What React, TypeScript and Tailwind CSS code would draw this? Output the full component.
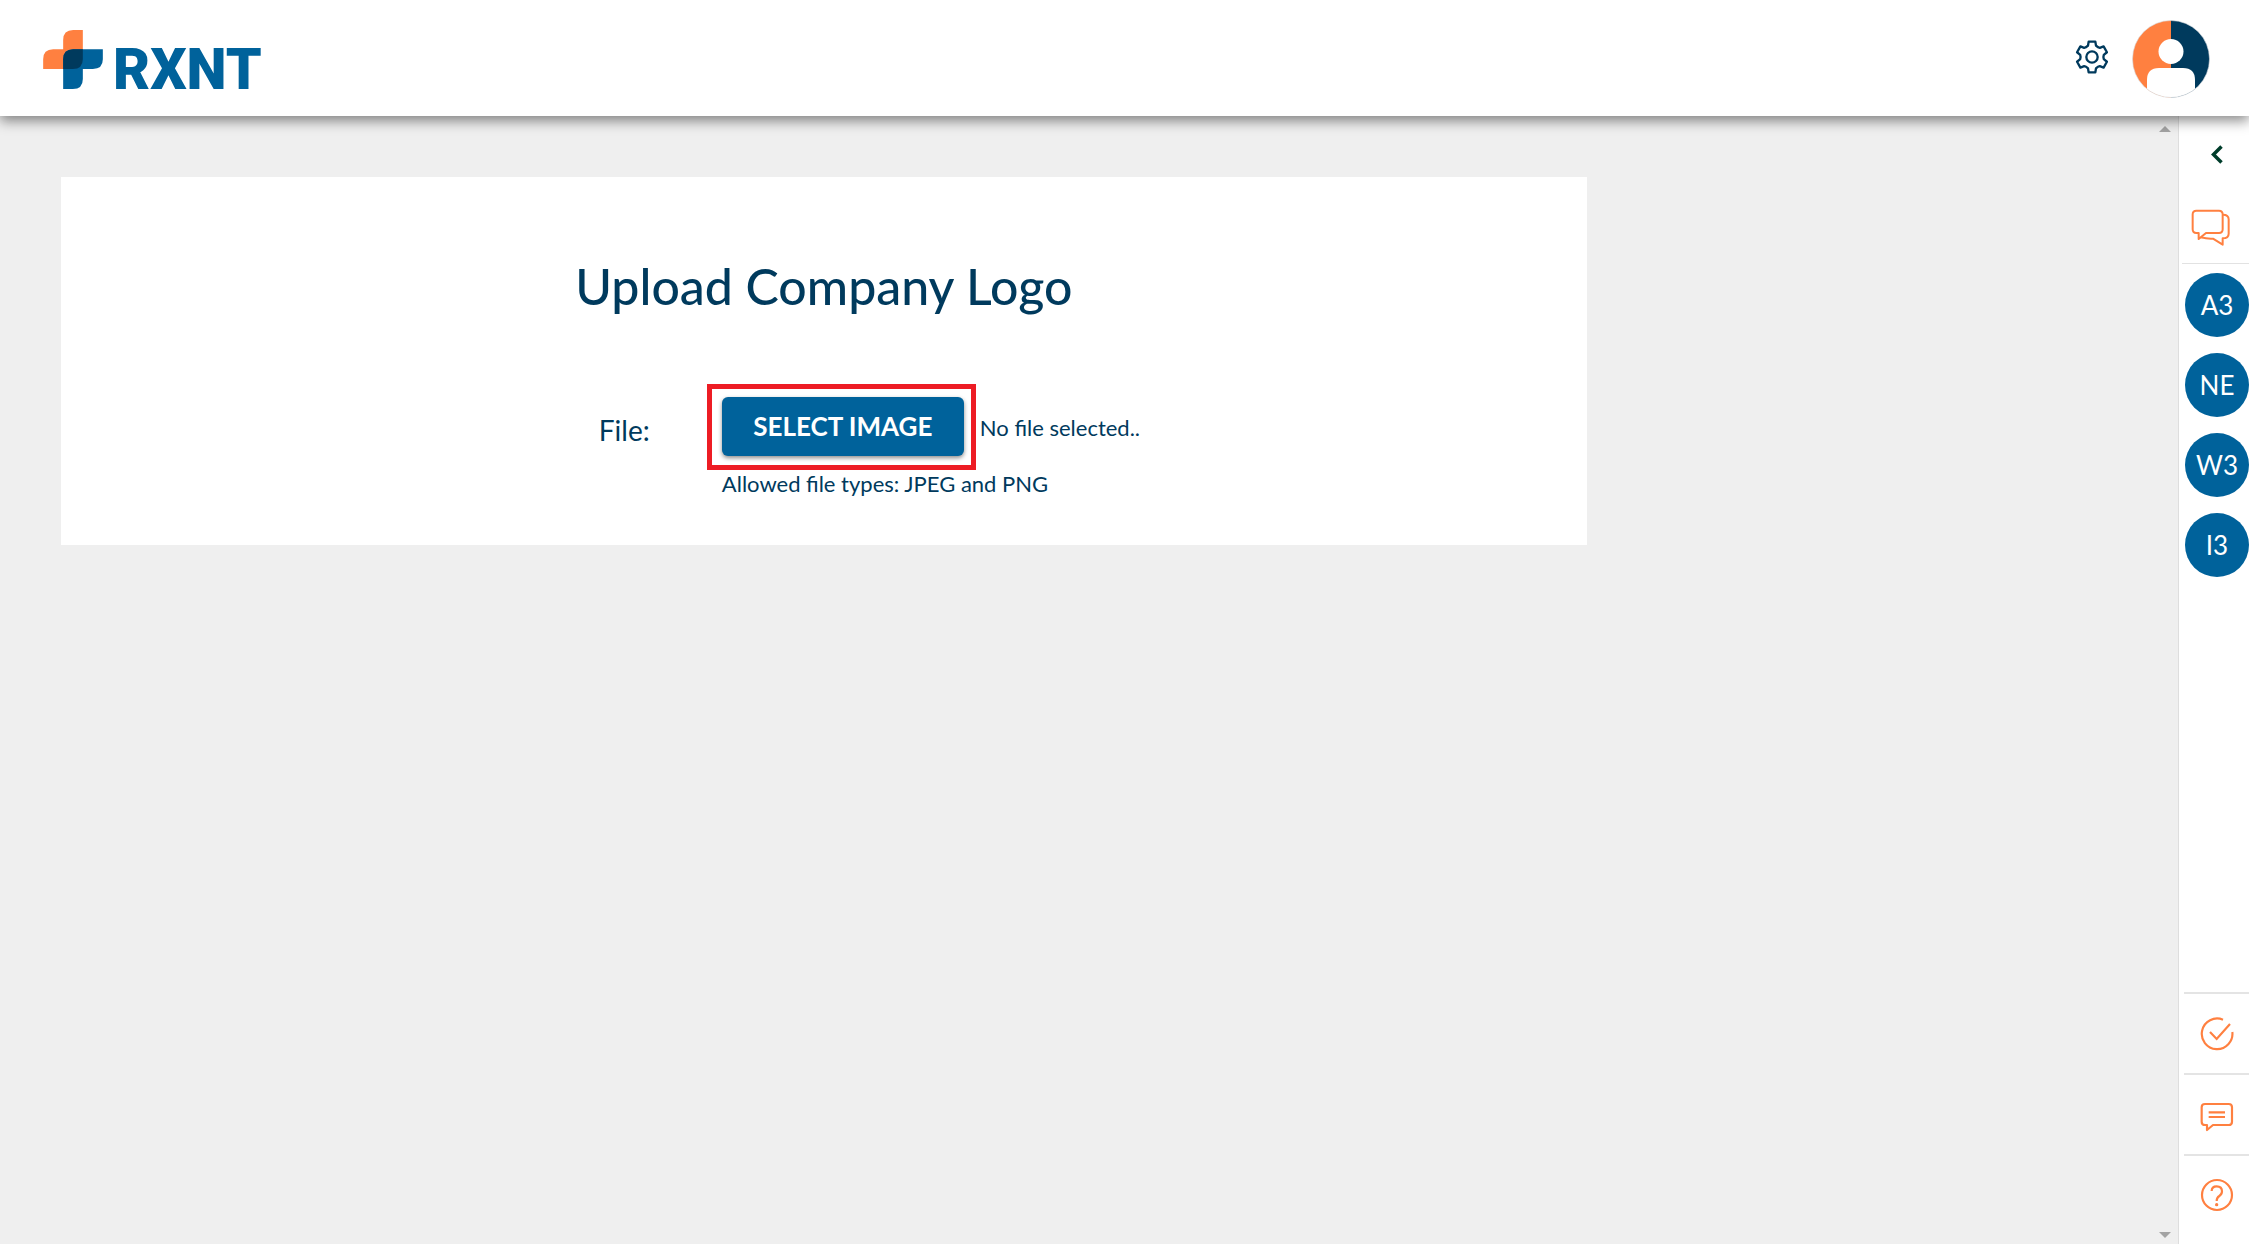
function Logo() {
  return (
    <a href="#" className="flex items-start gap-[10px]">
      <svg width="60" height="59" viewBox="0 0 179 177" aria-hidden="true">
        <path fill="#ff8040" d="M119 0H90Q60 0 60 30V58H30Q0 58 0 88V117H119Z" />
        <path fill="#00629b" d="M60 177V88Q60 58 90 58H179V88Q179 117 149 117H119V147Q119 177 89 177Z" />
        <path fill="#003a5d" d="M60 117V88Q60 58 90 58H119V87Q119 117 89 117Z" />
      </svg>
      <span className="pt-2 font-['Roboto',sans-serif] text-[57px] leading-[64px] font-black text-[#00629b]">RXNT</span>
    </a>
  );
}

function GearIcon() {
  return (
    <svg width="34" height="34" viewBox="-51 -51 102 102" fill="none" stroke="#003a5d" strokeWidth="7" strokeLinejoin="round" aria-hidden="true">
      <path d="M-12-34L-10-46H10L12-34Q18-28 23.4-27.4L34.8-31.7L44.8-14.3L35.4-6.6Q33 0 35.4 6.6L44.8 14.3L34.8 31.7L23.4 27.4Q18 28 12 34L10 46H-10L-12 34Q-18 28-23.4 27.4L-34.8 31.7L-44.8 14.3L-35.4 6.6Q-33 0-35.4-6.6L-44.8-14.3L-34.8-31.7L-23.4-27.4Q-18-28-12-34Z" />
      <circle r="17" />
    </svg>
  );
}

function Avatar() {
  return (
    <svg width="78" height="78" viewBox="0 0 78 78" aria-hidden="true">
      <clipPath id="avatar">
        <circle cx="39" cy="39" r="38.5" />
      </clipPath>
      <g clipPath="url(#avatar)">
        <path fill="#ff8040" d="M0 0H39V78H0Z" />
        <path fill="#003a5d" d="M39 0H78V78H39Z" />
        <circle cx="39" cy="31.5" r="12.5" fill="#fff" />
        <path fill="#fff" d="M15 78V60Q15 48 27 48H51Q63 48 63 60V78Z" />
      </g>
      <circle cx="39" cy="39" r="38.5" fill="none" stroke="#d5d9dc" strokeWidth="0.6" />
    </svg>
  );
}

function ChatIcon() {
  return (
    <svg width="40" height="38" viewBox="187 297 120 114" fill="none" stroke="#ff8040" strokeWidth="6" strokeLinejoin="round" aria-hidden="true">
      <path d="M203 302H271Q282 302 282 313V358Q282 369 271 369H232L210 387V369H203Q192 369 192 358V313Q192 302 203 302Z" />
      <path d="M283 314Q300 314 300 328V371Q300 385 282 385V404L253 386Q235 387 216 382" />
    </svg>
  );
}

function CheckIcon() {
  return (
    <svg width="36" height="36" viewBox="210 107 108 108" fill="none" stroke="#ff8040" strokeWidth="6.5" aria-hidden="true">
      <path d="M282 118A46 46 0 1 0 310 155" />
      <path d="M243 155L263 176L303 131" />
    </svg>
  );
}

function MessageIcon() {
  return (
    <svg width="36" height="36" viewBox="210 357 108 108" fill="none" stroke="#ff8040" strokeWidth="6.5" strokeLinejoin="round" aria-hidden="true">
      <path d="M228 372H299Q309 372 309 382V425Q309 435 299 435H252L234 450V435H228Q218 435 218 425V382Q218 372 228 372Z" />
      <path d="M239 397H288M239 411H288" />
    </svg>
  );
}

function HelpIcon() {
  return (
    <svg width="36" height="36" viewBox="210 591 108 108" fill="none" stroke="#ff8040" strokeWidth="6.5" aria-hidden="true">
      <circle cx="264" cy="645" r="45" />
      <path d="M248 633Q248 619 263 619Q279 619 279 634Q279 643 271 648Q263 653 263 663" />
      <circle cx="263" cy="674" r="5" fill="#ff8040" stroke="none" />
    </svg>
  );
}

const contacts = ["A3", "NE", "W3", "I3"];

function Sidebar() {
  return (
    <aside className="flex w-[71px] shrink-0 flex-col border-l border-[#dedede] bg-white">
      <button aria-label="Expand" className="flex h-[76px] items-center justify-center pl-[6px]">
        <svg width="12" height="19" viewBox="0 0 12 19" fill="none" stroke="#003d2b" strokeWidth="3.5" aria-hidden="true">
          <path d="M10.5 1.5L2.5 9.5L10.5 17.5" />
        </svg>
      </button>
      <button aria-label="Chats" className="ml-[3px] flex h-[72px] items-center border-b border-[#e2e2e2] pl-[9px]">
        <ChatIcon />
      </button>

      <div className="flex flex-col items-end gap-4 pt-[9px]">
        {contacts.map((name) => (
          <button key={name} className="size-16 rounded-full bg-[#00629b] text-[26px] text-white">
            {name}
          </button>
        ))}
      </div>

      <div className="mt-auto ml-[5px] flex flex-col">
        <button aria-label="Tasks" className="flex h-[81px] items-center justify-center border-t-2 border-[#e4e4e4]">
          <CheckIcon />
        </button>
        <button aria-label="Messages" className="flex h-[81px] items-center justify-center border-t-2 border-[#e4e4e4] pt-1">
          <MessageIcon />
        </button>
        <button aria-label="Help" className="flex h-[90px] items-center justify-center border-t-2 border-[#e4e4e4] pb-[10px]">
          <HelpIcon />
        </button>
      </div>
    </aside>
  );
}

function App() {
  return (
    <div className="flex min-h-screen flex-col bg-[#efefef] font-['Lato',sans-serif] text-[#003a5d]">
      {/* Header */}
      <header className="relative z-10 flex h-[116px] items-start justify-between bg-white pr-[39px] pl-[43px] shadow-[0_5px_12px_rgba(0,0,0,0.45)]">
        <div className="pt-[30px]">
          <Logo />
        </div>
        <div className="flex items-start gap-[23px]">
          <button aria-label="Settings" className="pt-10">
            <GearIcon />
          </button>
          <button aria-label="Profile" className="pt-5">
            <Avatar />
          </button>
        </div>
      </header>

      <div className="flex flex-1">
        {/* Content */}
        <main className="flex-1 pt-[61px] pl-[61px]">
          <section className="w-[73%] bg-white pt-[75px] pb-[47px]">
            <h1 className="text-center text-[50px] leading-[68px] font-medium">Upload Company Logo</h1>
            <div className="mx-auto mt-[64px] flex w-[630px]">
              <label htmlFor="select-image" className="w-[198px] shrink-0 pt-7 pl-[90px] text-[28px] leading-9">
                File:
              </label>
              <div>
                <div className="flex">
                  <div className="border-5 border-[#ed1c24] pt-2 pr-[7px] pb-[9px] pl-[10px]">
                    <button id="select-image" className="h-[59px] w-[242px] rounded-md bg-[#00629b] text-[26px] font-bold text-white shadow-[0_2px_4px_rgba(0,0,0,0.45)]">
                      SELECT IMAGE
                    </button>
                  </div>
                  <span className="pt-[29px] pl-1 text-[22px] leading-[30px] whitespace-nowrap">No file selected..</span>
                </div>
                <p className="pl-[15px] text-[22px] leading-7 whitespace-nowrap">Allowed file types: JPEG and PNG</p>
              </div>
            </div>
          </section>
        </main>

        {/* Scroll arrows */}
        <div className="flex w-[27px] shrink-0 flex-col items-center justify-between pt-[10px] pb-[6px]">
          <svg width="12" height="6" viewBox="0 0 12 6" fill="#a3a3a3" aria-hidden="true">
            <path d="M0 6L6 0L12 6Z" />
          </svg>
          <svg width="12" height="6" viewBox="0 0 12 6" fill="#a3a3a3" aria-hidden="true">
            <path d="M0 0L6 6L12 0Z" />
          </svg>
        </div>

        <Sidebar />
      </div>
    </div>
  );
}

export default App;
